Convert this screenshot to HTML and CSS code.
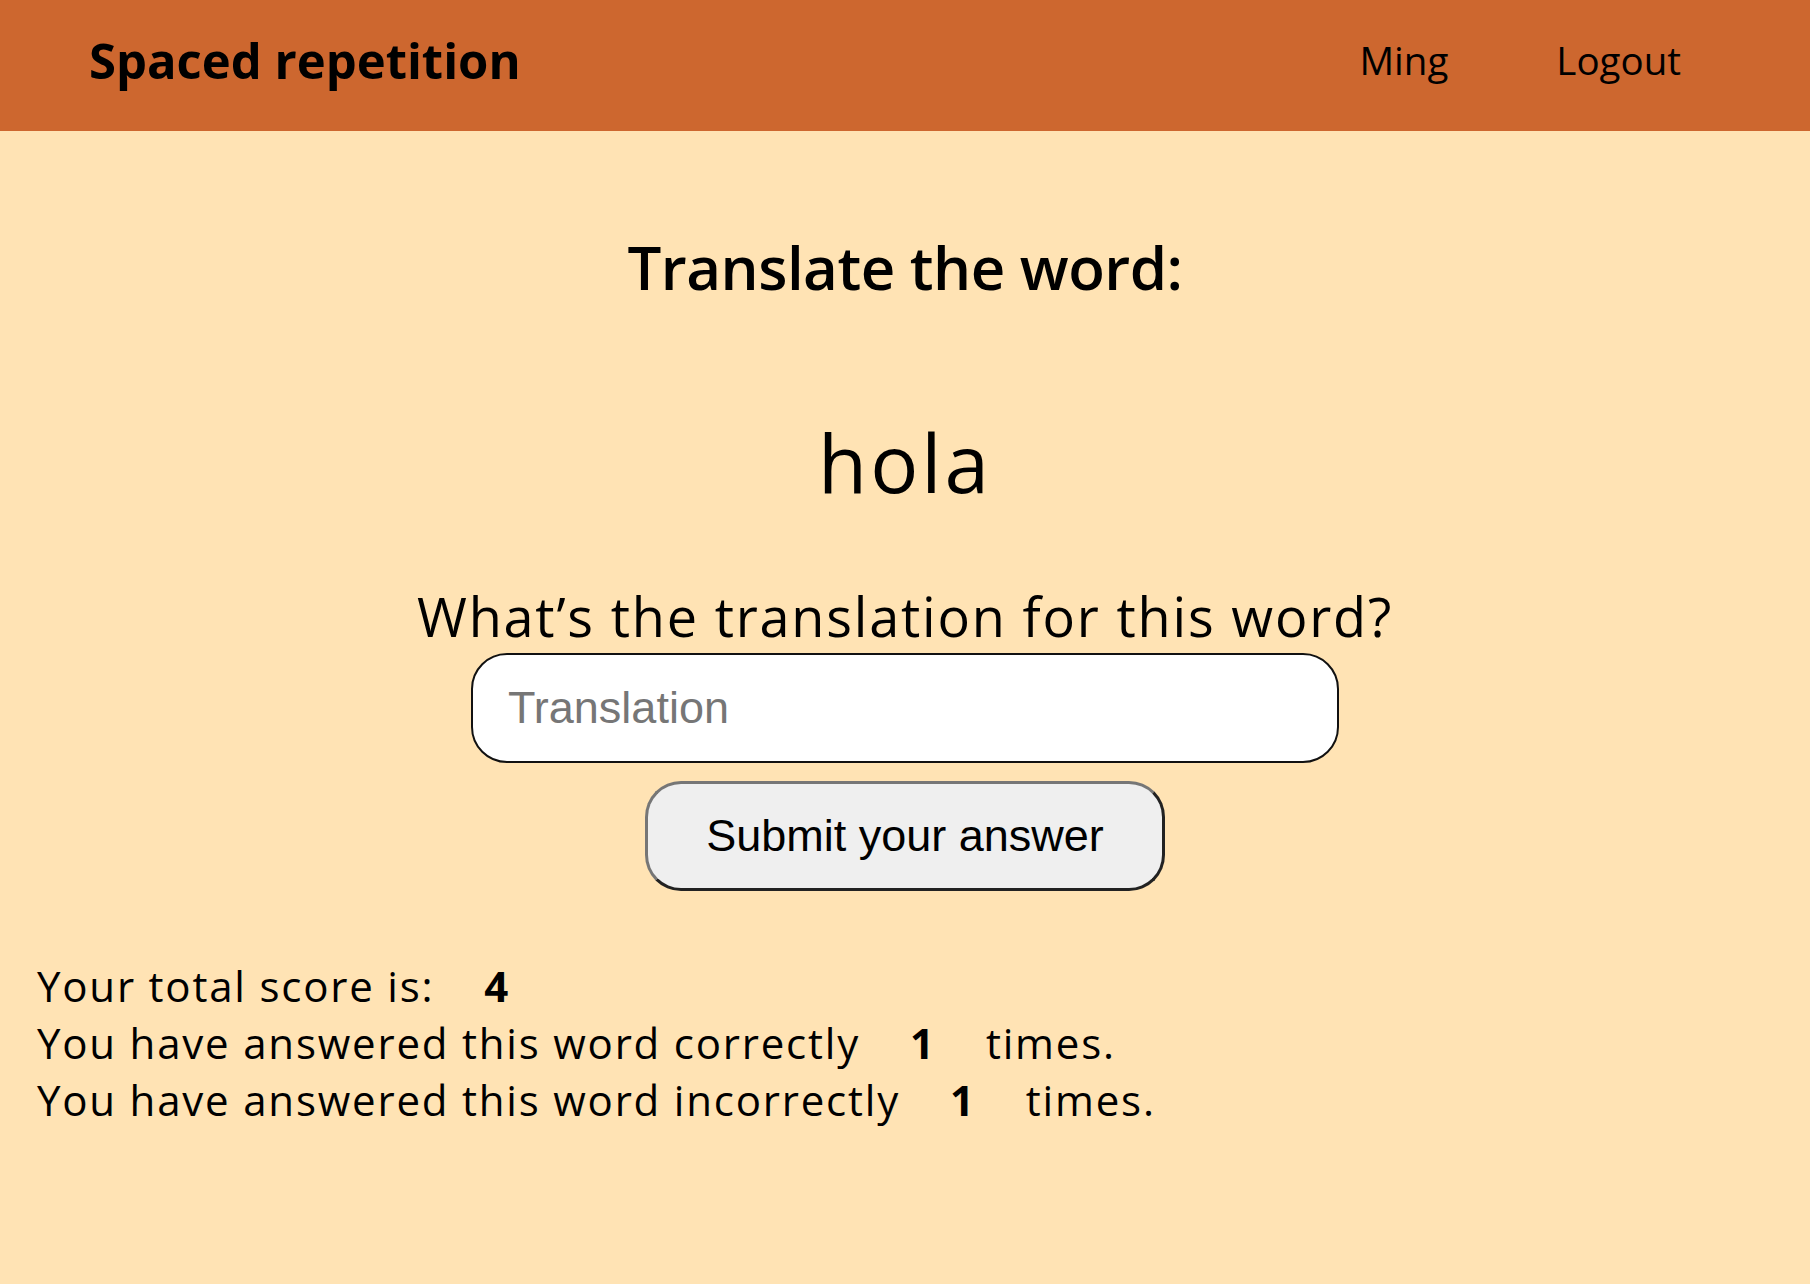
FILE: index.html
```html
<!DOCTYPE html>
<html lang="en">
<head>
<meta charset="utf-8">
<title>Spaced repetition</title>
<link rel="stylesheet" href="styles.css">
</head>
<body>
<header class="topbar">
  <h1 class="brand">Spaced repetition</h1>
  <nav class="nav">
    <span class="nav-user">Ming</span>
    <a class="nav-link" href="#">Logout</a>
  </nav>
</header>
<main class="main">
  <section class="card">
    <h2 class="prompt">Translate the word:</h2>
    <p class="word">hola</p>
    <form class="answer-form">
      <label class="question" for="answer">What’s the translation for this word?</label>
      <input id="answer" class="answer-input" type="text" placeholder="Translation">
      <button class="submit" type="button">Submit your answer</button>
    </form>
  </section>
  <section class="stats">
    <p class="stat">Your total score is:<span class="num">4</span></p>
    <p class="stat">You have answered this word correctly<span class="num">1</span>times.</p>
    <p class="stat">You have answered this word incorrectly<span class="num">1</span>times.</p>
  </section>
</main>
</body>
</html>
```

FILE: styles.css
```css
html, body {
  margin: 0;
  padding: 0;
}
body {
  background: #ffe3b4;
  color: #000;
  font-family: "Open Sans", Lato, sans-serif;
  min-height: 1284px;
}
.topbar {
  height: 131px;
  box-sizing: border-box;
  background: #cd672f;
  display: flex;
  align-items: center;
  justify-content: space-between;
  padding: 0 129px 12px 89px;
}
.brand {
  margin: 0;
  font-weight: 700;
  font-size: 49px;
  line-height: 60px;
}
.nav {
  display: flex;
  align-items: center;
  gap: 108px;
  font-size: 38.5px;
  line-height: 48px;
}
.nav-link {
  color: #000;
  text-decoration: none;
}
.main {
  display: flex;
  flex-direction: column;
}
.card {
  display: flex;
  flex-direction: column;
  align-items: center;
  padding-top: 100px;
}
.prompt {
  margin: 0;
  font-size: 60px;
  font-weight: 600;
  line-height: 72px;
  letter-spacing: -0.5px;
}
.word {
  margin: 111px 0 0;
  font-size: 80px;
  line-height: 96px;
  letter-spacing: 3px;
}
.answer-form {
  display: flex;
  flex-direction: column;
  align-items: center;
  margin-top: 74px;
}
.question {
  font-size: 54px;
  line-height: 65px;
  letter-spacing: 1.8px;
}
.answer-input {
  margin-top: 4px;
  width: 868px;
  height: 110px;
  box-sizing: border-box;
  border: 2px solid #111;
  border-radius: 36px;
  background: #fff;
  padding: 0 35px;
  font-family: "Liberation Sans", Arial, sans-serif;
  font-size: 45px;
  color: #000;
  outline: none;
}
.answer-input::placeholder {
  color: #767676;
}
.submit {
  margin-top: 18px;
  width: 520px;
  height: 110px;
  box-sizing: border-box;
  background: #efefef;
  border: 3px solid;
  border-color: #767676 #222 #222 #767676;
  border-radius: 36px;
  font-family: "Liberation Sans", Arial, sans-serif;
  font-size: 45px;
  color: #000;
  padding: 0;
}
.stats {
  padding: 66px 0 0 37px;
}
.stat {
  margin: 0;
  font-size: 42px;
  line-height: 57px;
  letter-spacing: 1.8px;
}
.num {
  font-weight: 700;
  padding: 0 50px;
}
```
